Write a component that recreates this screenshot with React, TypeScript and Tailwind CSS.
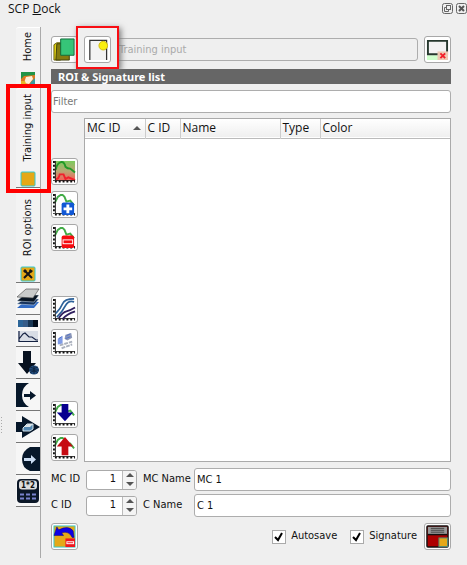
import React from 'react';

const font = "font-['DejaVu_Sans_Condensed','Noto_Sans',sans-serif]";
const toolBtn =
  'block size-[27px] shrink-0 rounded-[3px] border border-[#a8a8a8] bg-white p-px';
const field =
  'h-[23px] min-w-0 rounded-[3px] border border-[#adadad] bg-white outline-none';

function ToolButton({ label, children }: { label: string; children: React.ReactNode }) {
  return (
    <button aria-label={label} className={toolBtn}>
      <svg viewBox="0 0 24 24" className="block size-full">{children}</svg>
    </button>
  );
}

function Axes() {
  return (
    <>
      <path d="M2.500 1V21.500H23" fill="none" stroke="#222" strokeWidth="1" />
      <path d="M1 1V22" stroke="#111" strokeWidth="2" strokeDasharray="2 2" />
      <path d="M2 22.500H23" stroke="#111" strokeWidth="2" strokeDasharray="2 2" />
    </>
  );
}

function GreenCurve() {
  return <path d="M2 10L5 4L8 2H10L12 4L14 9L18 8L22 13" fill="none" stroke="#43ac47" strokeWidth="2" />;
}

function HomeIcon() {
  return (
    <>
      <rect x="1" y="1" width="14" height="14" fill="#dc7a20" />
      <path d="M1 1H15V4L4 5L1 8Z" fill="#219447" />
      <path d="M4 12L6 6L12 5L13 8L9 13Z" fill="#fff0d8" />
      <path d="M11 11L15 7V15H9Z" fill="#3b9aa0" />
      <path d="M1 10H5L7 15H1Z" fill="#e8b52a" />
    </>
  );
}

const curveButtons = {
  display: (
    <>
      <defs>
        <linearGradient id="sig" x2="0" y2="1">
          <stop stopColor="#7ccb5c" />
          <stop offset=".5" stopColor="#b9a873" />
          <stop offset="1" stopColor="#fb5a55" />
        </linearGradient>
      </defs>
      <rect x="2" y="1" width="21" height="21" fill="url(#sig)" />
      <path d="M3 10Q4 3 9 2Q12 2 13 7Q15 9 18 9L23 13" fill="none" stroke="#219a28" strokeWidth="2" />
      <path d="M3 20Q6 20 7 15H11L13 20L16 18L23 21" fill="none" stroke="#f0202c" strokeWidth="2" />
      <Axes />
    </>
  ),
  add: (
    <>
      <GreenCurve />
      <Axes />
      <rect x="9" y="10" width="13" height="13" rx="2" fill="#1057d5" />
      <path d="M15.500 12V21M11 16.500H20" stroke="white" strokeWidth="3" />
    </>
  ),
  remove: (
    <>
      <GreenCurve />
      <Axes />
      <rect x="9" y="10" width="13" height="13" rx="2" fill="#f50b10" />
      <rect x="10.500" y="14.500" width="10" height="4" fill="#f50b10" stroke="white" />
    </>
  ),
};

function LayerStack() {
  return (
    <>
      <path d="M1 21L8 15H23L18 21Z" fill="#326bc4" />
      <path d="M1 17L8 12H23L18 18Z" fill="#16325c" stroke="#d6e4f0" strokeWidth=".5" />
      <path d="M1 14L8 8H23L18 15Z" fill="#071423" stroke="#d6e4f0" strokeWidth=".5" />
      <path d="M1 10L10 2H23L17 11Z" fill="#c9cbcb" stroke="#444" strokeWidth=".6" />
    </>
  );
}

const sideIcons: { label: string; art: React.ReactNode }[] = [
  { label: 'Band set', art: <LayerStack /> },
  {
    label: 'Basic tools',
    art: (
      <>
        <path d="M2 1H7V8H2Z" fill="#2c6598" />
        <path d="M7 1H12V8H7Z" fill="#365c88" />
        <path d="M12 1H17V8H12Z" fill="#183654" />
        <path d="M17 1H22V8H17Z" fill="#020d1b" />
        <rect x="2" y="12" width="20" height="11" fill="#d8dde5" />
        <path d="M3 12V22.500H22M3 20L7 15L9 14L13 18L16 18L20 21H22" fill="none" stroke="#142142" strokeWidth="1.200" />
      </>
    ),
  },
  {
    label: 'Download products',
    art: (
      <>
        <path d="M7 0H15V12H20L11 23L2 12H7Z" fill="#07111f" />
        <ellipse cx="18" cy="19" rx="5" ry="4.500" fill="#214b7c" />
        <path d="M13 19H23M18 15V23M14 16Q18 19 22 16M14 22Q18 18 22 22" fill="none" stroke="#07172c" strokeWidth=".7" />
      </>
    ),
  },
  {
    label: 'Preprocessing',
    art: (
      <>
        <path d="M0 0H13Q6 4 6 12Q6 20 13 24H0Z" fill="#06172a" />
        <path d="M8 11H14V8L20 12.500L14 17V14H8Z" fill="#06172a" />
      </>
    ),
  },
  {
    label: 'Band processing',
    art: (
      <>
        <path d="M0 7H6V1L24 12L6 23V17H0Z" fill="#06172a" />
        <path d="M7 13L11 9H17V14L14 16H7Z" fill="#5488b3" stroke="#d9e8ee" />
        <path d="M8 12L12 9H17L14 12Z" fill="#dbe4e8" />
      </>
    ),
  },
  {
    label: 'Postprocessing',
    art: (
      <>
        <path d="M24 0H14Q6 4 6 12Q6 21 14 24H24Z" fill="#06172a" />
        <path d="M8 11H15V8L20 12.500L15 17V14H8Z" fill="#cadcf2" />
      </>
    ),
  },
  {
    label: 'Band calculator',
    art: (
      <>
        <rect x="1" y="0" width="22" height="24" rx="4" fill="#0b1727" />
        <rect x="3" y="1.500" width="18" height="9" rx="3" fill="#ddd" />
        <text x="12" y="9" fontSize="8" fontWeight="bold" textAnchor="middle" fill="#111">1*2</text>
        <path d="M4 15.500H20M4 19.500H20" stroke="#7983cf" strokeWidth="2" strokeDasharray="4 2" />
      </>
    ),
  },
];

function SideTab({
  label,
  size,
  children,
}: {
  label: string;
  size: string;
  children: React.ReactNode;
}) {
  return (
    <button
      className={`flex w-full flex-col items-center justify-end gap-2.5 rounded-tl-[3px] border-t border-b border-t-white border-b-[#777] bg-[#f3f3f3] ${size}`}
    >
      <span className="rotate-180 text-[11px] leading-4 whitespace-nowrap [writing-mode:vertical-rl]">{label}</span>
      <svg viewBox="0 0 16 16" className="block size-4 shrink-0">{children}</svg>
    </button>
  );
}

function IdRow({ name, value }: { name: string; value: string }) {
  const spinId = `${name}-number`;
  const textId = `${name}-name`;
  return (
    <div className="flex items-center">
      <label htmlFor={spinId} className="w-[35px] shrink-0 text-[11px] whitespace-nowrap">{name} ID</label>
      <div className="flex h-5 w-[51px] shrink-0 overflow-hidden rounded-[3px] border border-[#aaa] bg-white">
        <input id={spinId} defaultValue="1" inputMode="numeric" className="w-[35px] min-w-0 pr-1.5 text-right text-[11px] outline-none" />
        <div className="flex flex-1 flex-col border-l border-[#bbb] bg-[#f4f4f4]">
          <button aria-label={`Increase ${name} ID`} className="flex flex-1 items-center justify-center">
            <svg width="8" height="4" viewBox="0 0 8 4"><path d="M0 4L4 0L8 4Z" fill="#555" /></svg>
          </button>
          <button aria-label={`Decrease ${name} ID`} className="flex flex-1 items-center justify-center">
            <svg width="8" height="4" viewBox="0 0 8 4"><path d="M0 0L4 4L8 0Z" fill="#555" /></svg>
          </button>
        </div>
      </div>
      <label htmlFor={textId} className="ml-1.5 w-[51px] shrink-0 text-[11px] whitespace-nowrap">{name} Name</label>
      <input id={textId} defaultValue={value} className={`${field} flex-1 px-0.5 text-[11px]`} />
    </div>
  );
}

function Tick({ label }: { label: string }) {
  return (
    <label className="flex items-center gap-[5px] text-[11px]">
      <span className="grid size-3.5">
        <input type="checkbox" defaultChecked className="peer col-start-1 row-start-1 size-3.5 appearance-none border border-[#aaa] bg-white" />
        <svg viewBox="0 0 14 14" className="pointer-events-none col-start-1 row-start-1 hidden size-3.5 peer-checked:block">
          <path d="M3 7L6 10L10 3" fill="none" stroke="#000" strokeWidth="2" />
        </svg>
      </span>
      {label}
    </label>
  );
}

export default function App() {
  return (
    <main className={`min-h-screen bg-[#efefef] text-[#111] ${font}`}>
      <header className="flex h-[27px] items-start justify-between pl-2">
        <h1 className="font-['Open_Sans',sans-serif] text-xs leading-[18px]">SCP <u>D</u>ock</h1>
        <div className="flex gap-[3px] pt-[3px]">
          <button aria-label="Float panel">
            <svg width="11" height="11" viewBox="0 0 11 11" fill="none" stroke="#666">
              <rect x=".500" y=".500" width="10" height="10" rx="2" />
              <rect x="4.500" y="2.500" width="4" height="4" />
              <path d="M4 4.500H2.500V8.500H6.500V7" />
            </svg>
          </button>
          <button aria-label="Close panel">
            <svg width="11" height="11" viewBox="0 0 11 11" fill="none" stroke="#666">
              <rect x=".500" y=".500" width="10" height="10" rx="2" />
              <path d="M3 3L8 8M8 3L3 8" stroke="#555" strokeWidth="2" />
            </svg>
          </button>
        </div>
      </header>

      <div className="flex">
        <div aria-hidden="true" className="w-4 shrink-0">
          <svg width="4" height="17" viewBox="0 0 4 17" className="mt-[390px]">
            <path d="M1.500 0V17" stroke="#aaa" strokeDasharray="1 2" />
          </svg>
        </div>
        <nav className="flex w-[25px] shrink-0 flex-col border-r border-[#aaa]">
          <SideTab label="Home" size="h-[61px]"><HomeIcon /></SideTab>
          <div className="relative">
            <SideTab label="Training input" size="h-[100px]">
              <rect x="1" y="1" width="14" height="14" rx="1" fill="#e5a817" stroke="#31cad2" />
            </SideTab>
            <span className="pointer-events-none absolute -top-1 -left-2.5 h-[109px] w-[45px] border-4 border-[#ff0000]" />
          </div>
          <SideTab label="ROI options" size="h-[95px]">
            <rect x="1" y="1" width="14" height="14" rx="1" fill="#e5a817" stroke="#31cad2" />
            <path d="M5 5L12 12M11 5L4 12" stroke="#151515" strokeWidth="2" />
            <path d="M3 5L5 3L7 5L5 7ZM10 3L13 5L11 7L9 5Z" fill="#151515" />
          </SideTab>
          {sideIcons.map((tab) => (
            <button key={tab.label} aria-label={tab.label} className="flex h-8 w-full shrink-0 items-center justify-center border-b border-[#777] bg-[#f6f6f6]">
              <svg viewBox="0 0 24 24" className="block size-6">{tab.art}</svg>
            </button>
          ))}
        </nav>

        <section className="min-w-0 flex-1 pt-[9px] pr-4 pb-2 pl-2.5">
          <div className="flex items-center">
            <ToolButton label="Open training input">
              <path d="M1 7L4 5H8V23H1Z" fill="#e5d515" stroke="#625b08" />
              <path d="M4 6H17V23H3Z" fill="#857b10" stroke="#40400b" />
              <path d="M8 1H22V18H8Z" fill="#36c578" stroke="#116b39" />
            </ToolButton>
            <div className="relative ml-1.5">
              <ToolButton label="New training input">
                <path d="M4 23V2.500H21.500V23" fill="#f3f3f3" stroke="#333" strokeWidth="1.300" />
                <circle cx="18" cy="8" r="4.500" fill="#f9ee0e" stroke="#cfb910" />
              </ToolButton>
              <span className="pointer-events-none absolute -top-2.5 -left-2 h-[43px] w-[43px] border-2 border-[#f80d13] shadow-[2px_2px_6px_#777]" />
            </div>
            <input aria-label="Training input file" disabled defaultValue="Training input" className="ml-1.5 h-[23px] min-w-0 flex-1 rounded-[3px] border border-[#adadad] bg-transparent px-px text-[11px] text-[#aaa]" />
            <div className="ml-1.5">
              <ToolButton label="Remove training input">
                <path d="M1 18H13V23H1Z" fill="#cfffcc" />
                <path d="M2 3H22V17H2Z" fill="#f3f3f3" stroke="#26382e" strokeWidth="2" />
                <rect x="12" y="14" width="11" height="9" fill="#eec9b4" />
                <path d="M15 16L20 21M20 16L15 21" stroke="#f3202a" strokeWidth="2" />
              </ToolButton>
            </div>
          </div>

          <h2 className="mt-1.5 h-[15px] bg-[#666] pl-[7px] font-['Noto_Sans',sans-serif] text-[11px] leading-[15px] font-bold text-white">ROI &amp; Signature list</h2>
          <input aria-label="Filter" placeholder="Filter" className={`${field} mt-1.5 block w-full px-px text-[11px] placeholder:text-[#777]`} />

          <div className="mt-[5px] flex gap-1.5">
            <div className="flex flex-col pt-10">
              <div className="flex flex-col gap-1.5">
                <ToolButton label="Show signature">{curveButtons.display}</ToolButton>
                <ToolButton label="Add signature">{curveButtons.add}</ToolButton>
                <ToolButton label="Delete signature">{curveButtons.remove}</ToolButton>
              </div>
              <div className="mt-[45px] flex flex-col gap-1.5">
                <ToolButton label="Signature plot">
                  <Axes />
                  <path d="M3 16Q8 11 10 6T22 1M4 20Q10 14 13 8T22 4" fill="none" stroke="#2c6199" strokeWidth="1.800" />
                  <path d="M6 21Q10 15 14 14T23 10M10 22Q14 17 23 14" fill="none" stroke="#30205f" strokeWidth="1.800" />
                </ToolButton>
                <ToolButton label="Scatter plot">
                  <Axes />
                  <path d="M5 8L10 5V13L5 14Z" fill="#7f9be6" />
                  <path d="M13 4L19 2L20 7L15 10L12 8Z" fill="#8c98b8" />
                  <path d="M6 8L9 6M14 5L18 3M13 8L18 6" stroke="#5370c8" />
                  <path d="M7 15L20 11M9 18L20 14" fill="none" stroke="#aab0bd" strokeWidth="2" strokeDasharray="4 1" />
                </ToolButton>
              </div>
              <div className="mt-[45px] flex flex-col gap-1.5">
                <ToolButton label="Import signatures">
                  <GreenCurve /><Axes />
                  <path d="M9 1H16V10H21L12.500 19L4 10H9Z" fill="#06008e" />
                </ToolButton>
                <ToolButton label="Export signatures">
                  <GreenCurve /><Axes />
                  <path d="M9 20H16V11H21L12.500 1L4 11H9Z" fill="#c60b13" />
                </ToolButton>
              </div>
            </div>
            <div className="min-h-[344px] min-w-0 flex-1 border border-[#aaa] bg-white">
              <table className="w-full table-fixed border-collapse font-['Open_Sans',sans-serif] text-xs">
                <thead>
                  <tr className="h-[19px] border-b border-[#bbb] bg-linear-to-b from-white to-[#efefef] text-left">
                    <th className="w-[60px] border-r border-[#ccc] p-0 pl-0.5 leading-[18px] font-normal">
                      <button className="flex w-full items-center justify-between pr-1">
                        MC ID
                        <svg width="8" height="4" viewBox="0 0 8 4"><path d="M0 4L4 0L8 4Z" fill="#555" /></svg>
                      </button>
                    </th>
                    <th className="w-[35px] border-r border-[#ccc] p-0 pl-0.5 leading-[18px] font-normal">C ID</th>
                    <th className="w-[100px] border-r border-[#ccc] p-0 pl-0.5 leading-[18px] font-normal">Name</th>
                    <th className="w-10 border-r border-[#ccc] p-0 pl-0.5 leading-[18px] font-normal">Type</th>
                    <th className="p-0 pl-0.5 leading-[18px] font-normal">Color</th>
                  </tr>
                </thead>
                <tbody />
              </table>
            </div>
          </div>

          <div className="mt-1.5 flex flex-col gap-[3px]">
            <IdRow name="MC" value="MC 1" />
            <IdRow name="C" value="C 1" />
          </div>

          <div className="mt-1.5 flex items-center">
            <ToolButton label="Undo save">
              <rect x="1" y="1" width="22" height="22" fill="#e5a817" stroke="#31cad2" />
              <path d="M1 11L4 2L6 5Q16 0 21 6L22 13H20Q17 6 9 8L11 11Z" fill="#0c00e8" stroke="#090078" strokeWidth=".5" />
              <rect x="13" y="14" width="10" height="9" fill="#ef1720" />
              <path d="M14 18.500H22" stroke="white" strokeWidth="3" />
              <path d="M15 18.500H21" stroke="#ef1720" />
            </ToolButton>
            <div className="mr-[7px] ml-auto flex items-center gap-[13px]">
              <Tick label="Autosave" />
              <Tick label="Signature" />
            </div>
            <ToolButton label="Save ROI">
              <rect x="1" y="1" width="22" height="22" rx="1" fill="#ad0000" stroke="#111" strokeWidth="1.500" />
              <rect x="2" y="2" width="20" height="8" fill="#999" />
              <path d="M5 3.500H19M5 5.500H19M5 7.500H19" stroke="#444" strokeWidth="1" />
              <path d="M2 10H22" stroke="#111" strokeWidth="1.500" />
              <rect x="13.500" y="13.500" width="9" height="9" fill="#e5a817" stroke="#4c8c79" />
            </ToolButton>
          </div>
        </section>
      </div>
    </main>
  );
}
